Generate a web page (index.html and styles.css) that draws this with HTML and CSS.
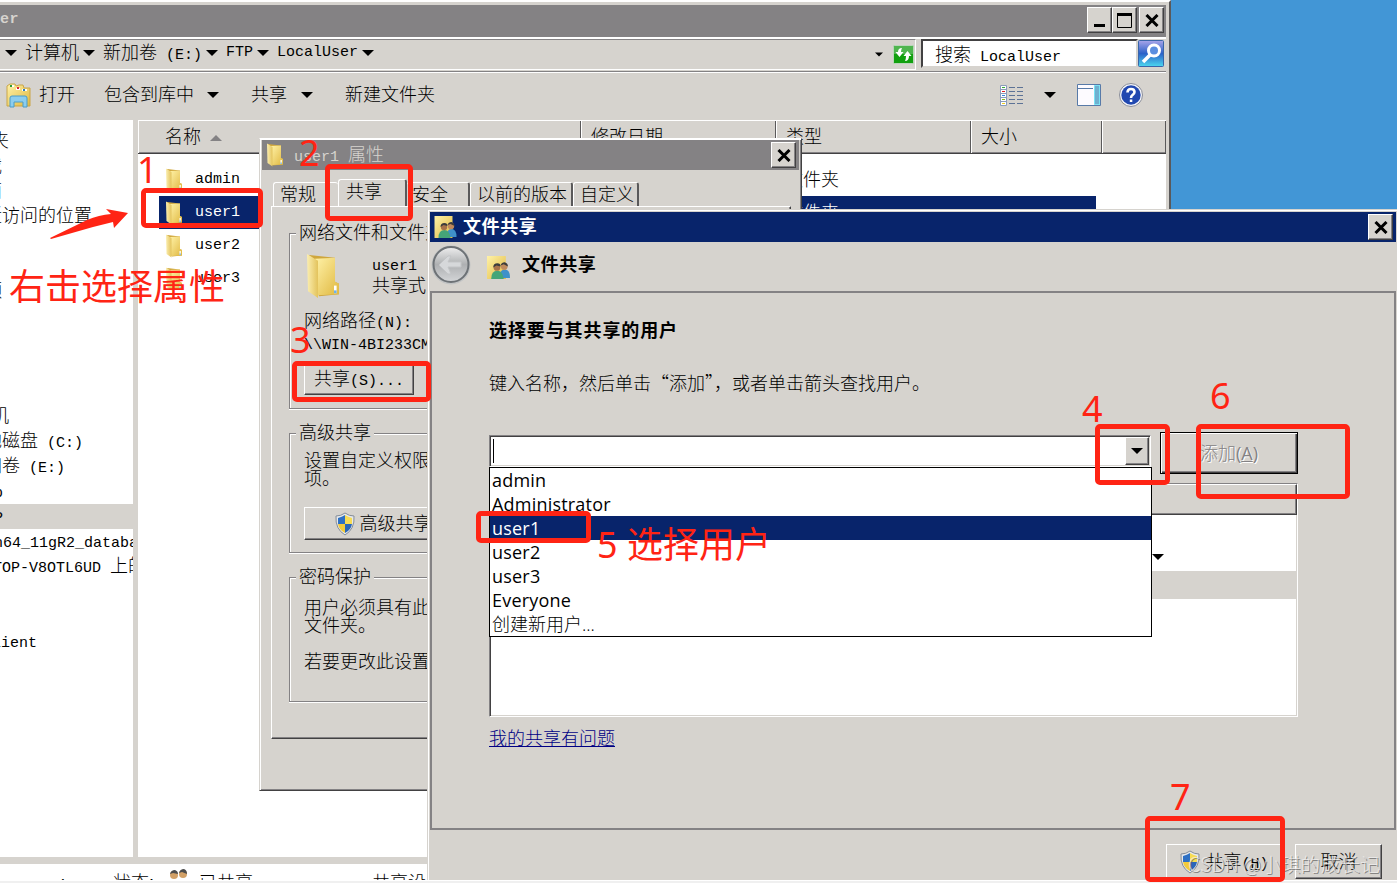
FILE: index.html
```html
<!DOCTYPE html>
<html lang="zh-CN">

<head>
  <meta charset="UTF-8" />
  <title>LocalUser</title>
  <link rel="stylesheet" href="styles.css">
</head>

<body>
  <!-- shared icons -->
  <svg class="defs" width="0" height="0">
    <defs>
      <linearGradient id="gold" x1="0" x2="1" y1="0" y2="1">
        <stop offset="0" stop-color="#fff2a8" />
        <stop offset="1" stop-color="#e0b840" />
      </linearGradient>
      <linearGradient id="lens" x1="0" x2="0" y1="0" y2="1">
        <stop offset="0" stop-color="#a9a5ea" />
        <stop offset="0.5" stop-color="#2c62c8" />
        <stop offset="1" stop-color="#4cd8f0" />
      </linearGradient>
      <linearGradient id="silver" x1="0" x2="0" y1="0" y2="1">
        <stop offset="0" stop-color="#eeeeee" />
        <stop offset="0.5" stop-color="#aeb0b2" />
        <stop offset="1" stop-color="#d4d6d8" />
      </linearGradient>
      <linearGradient id="flap" x1="0" x2="1" y1="0" y2="0">
        <stop offset="0" stop-color="#fbeeb0" />
        <stop offset="1" stop-color="#e3c35c" />
      </linearGradient>
      <symbol id="folder" viewBox="0 0 18 24" preserveAspectRatio="none">
        <path d="M2 1L15 2.500V15L17 16V21.500L7 22.500Z" fill="#cfa63c" />
        <path d="M5 3L15 2.500V15L17 16V21.500L6 22Z" fill="url(#gold)" />
        <path d="M1 .5L6.500 4V23.500L1.500 20Z" fill="url(#flap)" />
        <path d="M14.500 17h1.300v4h-1.300z" fill="#fff" />
        <path d="M14.500 19.500h1.300v1.500h-1.300z" fill="#6fb0e8" />
      </symbol>
      <symbol id="people" viewBox="0 0 22 22">
        <path d="M0 0H18V22H0Z" fill="url(#gold)" />
        <path d="M12 21q0-8 5-8q5 0 5 8z" fill="#3f91c9" />
        <path d="M4 22q0-8 6-8q5 0 6 8z" fill="#45a578" />
        <circle cx="9.500" cy="11" r="3.200" fill="#a8734a" />
        <circle cx="16.500" cy="10" r="3.200" fill="#c08a5c" />
        <path d="M6 11Q6 7 10 7Q13 7 13 10L9 9ZM13 9Q14 6 17 6Q20 7 20 10L16 8Z" fill="#3c3c3c" />
      </symbol>
      <symbol id="shield" viewBox="0 0 20 24">
        <path d="M10 1Q14 4 19 4Q20 17 10 23Q0 17 1 4Q6 4 10 1Z" fill="#e5e8ec" stroke="#858d98" />
        <path d="M10 3Q7 5 3 6V12H10Z" fill="#2d70c4" />
        <path d="M10 3Q13 5 17 6V12H10Z" fill="#f7dc55" />
        <path d="M3 12H10V21Q4 18 3 12Z" fill="#f2cb3b" />
        <path d="M17 12H10V21Q16 18 17 12Z" fill="#2a66b8" />
      </symbol>
      <symbol id="down" viewBox="0 0 12 6">
        <path d="M0 0H12L6 6Z" fill="#000" />
      </symbol>
      <symbol id="cross" viewBox="0 0 14 13">
        <path d="M1.500 1L12.500 12M12.500 1L1.500 12" stroke="#000" stroke-width="3" />
      </symbol>
    </defs>
  </svg>

  <div class="desktop">

    <div class="window explorer">
      <div class="title-bar inactive">
        <span class="en bold">er</span>
        <div class="controls">
          <button class="ctl"><svg width="14" height="14"><path d="M1 11H12V14H1Z" /></svg></button>
          <button class="ctl"><svg width="16" height="15"><path d="M.5 1H14.500V14.500H.5Z" fill="none" stroke="#000" /><path d="M0 0H15V3H0Z" /></svg></button>
          <button class="ctl last"><svg width="14" height="13"><use href="#cross" /></svg></button>
        </div>
      </div>

      <div class="address-row">
        <div class="address">
          <svg class="arrow"><use href="#down" /></svg>
          <span>计算机</span>
          <svg class="arrow"><use href="#down" /></svg>
          <span>新加卷<span class="en"> (E:)</span></span>
          <svg class="arrow"><use href="#down" /></svg>
          <span class="en">FTP</span>
          <svg class="arrow"><use href="#down" /></svg>
          <span class="en">LocalUser</span>
          <svg class="arrow"><use href="#down" /></svg>
          <svg class="arrow small"><use href="#down" /></svg>
          <svg class="refresh" width="21" height="19" viewBox="0 0 21 19">
            <rect x=".5" y=".5" width="20" height="18" rx="1" fill="#4fb54f" stroke="#b9d6b9" />
            <path d="M1 9H20V18H1Z" fill="#12a00f" />
            <path d="M9 3Q5 3 5 7H2.500L6.500 12L10.500 7H8Q8 5 9 3ZM12 16Q16 16 16 11H18.500L14.500 6L10.500 11H13Q13 14 12 16Z" fill="#fff" />
          </svg>
        </div>
        <div class="search">搜索<span class="en"> LocalUser</span></div>
        <svg class="search-btn" width="26" height="27" viewBox="0 0 26 27">
          <rect x=".5" y=".5" width="25" height="26" rx="1" fill="url(#lens)" stroke="#3a66a8" />
          <circle cx="16" cy="10.500" r="5.500" fill="#5b8ee0" stroke="#fff" stroke-width="3" />
          <path d="M12 15L5 22" stroke="#fff" stroke-width="3.500" />
        </svg>
      </div>

      <div class="toolbar">
        <svg width="25" height="25" viewBox="0 0 25 25">
          <path d="M1 3L4 1H9L10 3L13 2H17L18 5H24V23H1Z" fill="url(#gold)" stroke="#c9a548" />
          <path d="M4 2H8V4H4ZM10 5H14V7H10ZM16 6H21V8H16Z" fill="#fff" />
          <path d="M4 2h2v2H4z" fill="#2a9a3a" /><path d="M11 4h2v2h-2z" fill="#d23" /><path d="M17 6h2v2h-2z" fill="#2a7ac0" />
          <path d="M4 24V15Q4 13 6 13H19Q21 13 21 15V24H17V19H8V24Z" fill="#8ccdee" stroke="#4b9cc8" />
        </svg>
        <span class="t-open">打开</span>
        <span class="t-lib">包含到库中</span>
        <svg class="arrow"><use href="#down" /></svg>
        <span class="t-share">共享</span>
        <svg class="arrow"><use href="#down" /></svg>
        <span class="t-new">新建文件夹</span>
        <svg class="t-view" width="24" height="21" viewBox="0 0 24 21">
          <path d="M.5 .5H6.500V20.500H.5ZM0 4.500H7M0 8.500H7M0 12.500H7M0 16.500H7" fill="#fff" stroke="#8a9cba" />
          <path d="M9 2.500H15M17 2.500H23M9 6.500H15M17 6.500H23M9 10.500H15M17 10.500H23M9 14.500H15M17 14.500H23M9 18.500H15M17 18.500H23" stroke="#5c7296" />
          <path d="M2 2h3v1H2z" fill="#3a3" /><path d="M2 6h3v1H2z" fill="#d22" /><path d="M2 10h3v1H2z" fill="#38d" /><path d="M2 14h3v1H2z" fill="#8b2" /><path d="M2 18h3v1H2z" fill="#ec2" />
        </svg>
        <svg class="arrow"><use href="#down" /></svg>
        <svg class="t-pane" width="24" height="22" viewBox="0 0 24 22">
          <path d="M.5 .5H23.500V21.500H.5Z" fill="#fdfbff" stroke="#587aa8" />
          <path d="M1 4.500H16" stroke="#587aa8" />
          <path d="M17.500 1.500H22.500V20.500H17.500Z" fill="#6fb0d0" stroke="#79e3f5" />
        </svg>
        <svg class="t-help" width="24" height="24" viewBox="0 0 24 24">
          <circle cx="12" cy="12" r="11.500" fill="#f2f3f8" stroke="#8a8d98" />
          <circle cx="12" cy="12" r="9.700" fill="#2148b0" />
          <path d="M8.500 9.500Q8.500 6 12 6Q15.500 6 15.500 9Q15.500 11 13.500 12Q12 13 12 15" fill="none" stroke="#fff" stroke-width="2.600" />
          <path d="M10.800 16.500h2.500V19h-2.500z" fill="#fff" />
        </svg>
      </div>

      <div class="content">
        <ul class="nav">
          <li class="root">收藏夹</li>
          <li>下载</li>
          <li>桌面</li>
          <li>最近访问的位置</li>
          <li></li>
          <li></li>
          <li>视频</li>
          <li></li>
          <li></li>
          <li></li>
          <li></li>
          <li class="root">计算机</li>
          <li>本地磁盘<span class="en"> (C:)</span></li>
          <li>新加卷<span class="en"> (E:)</span></li>
          <li class="deep"><span class="en">ftp</span></li>
          <li class="deep selected"><span class="en">FTP</span></li>
          <li class="deep"><span class="en">win64_11gR2_database</span></li>
          <li class="root host"><span class="en">DESKTOP-V8OTL6UD </span>上的</li>
          <li></li>
          <li></li>
          <li class="client"><span class="en">Client</span></li>
        </ul>
        <div class="files">
          <div class="columns">
            <div class="col-name">名称 <i class="sort"></i></div>
            <div class="col-date">修改日期</div>
            <div class="col-type">类型</div>
            <div class="col-size">大小</div>
            <div class="col-rest"></div>
          </div>
          <div class="file">
            <svg width="18" height="24"><use href="#folder" /></svg>
            <span class="en fname">admin</span><span>文件夹</span>
          </div>
          <div class="file selected">
            <svg width="18" height="24"><use href="#folder" /></svg>
            <span class="en fname">user1</span><span>文件夹</span>
          </div>
          <div class="file">
            <svg width="18" height="24"><use href="#folder" /></svg>
            <span class="en fname">user2</span><span>文件夹</span>
          </div>
          <div class="file">
            <svg width="18" height="24"><use href="#folder" /></svg>
            <span class="en fname">user3</span><span>文件夹</span>
          </div>
        </div>
      </div>

      <div class="status">
        <span class="s-name"><span class="en">user1</span></span>
        <span class="s-state">状态:</span>
        <svg width="20" height="20" viewBox="0 0 20 20">
          <circle cx="5" cy="6" r="4" fill="#d2a066" /><circle cx="14" cy="5" r="4" fill="#d2a066" />
          <path d="M1 5Q2 1 6 1Q9 2 9 5L4 4ZM10 4Q11 0 15 0Q18 1 18 5L13 3Z" fill="#4c4c4c" />
        </svg>
        <span class="s-shared">已共享</span>
        <span>共享设备</span>
      </div>
    </div>

    <div class="window props">
      <div class="title-bar inactive">
        <svg width="18" height="24"><use href="#folder" /></svg>
        <span class="props-title"><span class="en">user1 </span>属性</span>
        <div class="controls">
          <button class="ctl"><svg width="14" height="13"><use href="#cross" /></svg></button>
        </div>
      </div>
      <div class="tabs">
        <div class="tab">常规</div>
        <div class="tab active">共享</div>
        <div class="tab safe">安全</div>
        <div class="tab prev">以前的版本</div>
        <div class="tab">自定义</div>
      </div>
      <div class="tab-panel">
        <div class="group network">
          <div class="legend">网络文件和文件夹共享</div>
          <div class="share-info">
            <svg width="36" height="46"><use href="#folder" /></svg>
            <div><span class="en">user1</span><br>共享式</div>
          </div>
          <p class="path">网络路径<span class="en">(N):</span><br><span class="en">\\WIN-4BI233CMEF\user1</span></p>
          <button class="btn share-btn"><span>共享<span class="en">(S)...</span></span></button>
        </div>
        <div class="group advanced">
          <div class="legend">高级共享</div>
          <p>设置自定义权限，创建多个共享<br>项。</p>
          <button class="btn adv-btn"><svg width="20" height="24"><use href="#shield" /></svg>高级共享</button>
        </div>
        <div class="group password">
          <div class="legend">密码保护</div>
          <p>用户必须具有此计算机的帐户<br>文件夹。</p>
          <p class="more">若要更改此设置，请使用</p>
        </div>
      </div>
    </div>

    <div class="window sharing">
      <div class="title-bar">
        <svg width="23" height="22"><use href="#people" /></svg>
        <span class="bold">文件共享</span>
        <div class="controls">
          <button class="ctl"><svg width="14" height="13"><use href="#cross" /></svg></button>
        </div>
      </div>
      <div class="wizard-head">
        <svg width="42" height="42" viewBox="0 0 42 42">
          <circle cx="21" cy="21" r="19.500" fill="#c2c4c5" />
          <circle cx="21" cy="20.500" r="17.500" fill="url(#silver)" stroke="#6d7276" stroke-width="2" />
          <path d="M9 21L18 12H21L18 18H31V23H18L21 30H18Z" fill="#d6d8da" stroke="#c3c5c7" />
        </svg>
        <svg class="people" width="23" height="23"><use href="#people" /></svg>
        <span class="bold">文件共享</span>
      </div>
      <div class="wizard-body">
        <h1 class="bold">选择要与其共享的用户</h1>
        <p class="hint">键入名称，然后单击“添加”，或者单击箭头查找用户。</p>
        <div class="add-row">
          <div class="combo">
            <span class="caret"></span>
            <button class="ctl"><svg width="12" height="6"><use href="#down" /></svg></button>
            <ul class="options">
              <li>admin</li>
              <li>Administrator</li>
              <li class="selected">user1</li>
              <li>user2</li>
              <li>user3</li>
              <li>Everyone</li>
              <li>创建新用户...</li>
            </ul>
          </div>
          <button class="add">添加<b>(<u>A</u>)</b></button>
        </div>
        <div class="people-list">
          <div class="list-head"></div>
          <div class="list-row"><svg width="12" height="6"><use href="#down" /></svg></div>
          <div class="list-row gray"></div>
        </div>
        <a class="link">我的共享有问题</a>
      </div>
      <div class="wizard-foot">
        <button class="btn ok"><svg width="20" height="24"><use href="#shield" /></svg><span>共享<span class="en">(<u>H</u>)</span></span></button>
        <button class="btn cancel">取消</button>
      </div>
    </div>

    <div class="bottom-edge"></div>

    <!-- step marks -->
    <div class="mark box1"></div>
    <div class="mark box2"></div>
    <div class="mark box3"></div>
    <div class="mark box4"></div>
    <div class="mark box5"></div>
    <div class="mark box6"></div>
    <div class="mark box7"></div>
    <div class="note n1">1</div>
    <div class="note n2">2</div>
    <div class="note n3">3</div>
    <div class="note n4">4</div>
    <div class="note n5">5 选择用户</div>
    <div class="note n6">6</div>
    <div class="note n7">7</div>
    <div class="note right-click">右击选择属性</div>
    <svg class="pointer" width="80" height="32" viewBox="0 0 80 32">
      <path d="M1 30L38 12Q50 7 62 6L57 1L79 5L65 20L64 14L44 19L2 31Z" fill="#ff2414" />
    </svg>
    <div class="watermark">CSDN @小琪的成长记</div>
  </div>
</body>

</html>
```
FILE: styles.css
```css
* {
  box-sizing: border-box;
}

body {
  margin: 0;
  font-family: "Liberation Sans", "Noto Sans CJK SC", sans-serif;
  font-size: 18px;
  font-weight: 300;
  line-height: 18px;
  color: #000;
}

ul,
p,
h1 {
  margin: 0;
  padding: 0;
  list-style: none;
}

button {
  font: inherit;
  padding: 0;
  border: 0;
  color: #000;
}

svg {
  display: block;
  flex: none;
}

.defs {
  position: absolute;
}

.desktop {
  position: relative;
  width: 1397px;
  height: 883px;
  overflow: hidden;
  background: #4296d6;
  white-space: nowrap;
}

.en {
  font-family: "Liberation Mono", monospace;
  font-size: 15px;
  line-height: 0;
  white-space: pre;
}

.bold {
  font-size: 18px;
  font-weight: 700;
  letter-spacing: 0.6px;
}

h1.bold {
  letter-spacing: 0.9px;
}

.en.bold {
  font-size: 15px;
}

.arrow {
  width: 12px;
  height: 6px;
}

/* windows */
.window {
  position: absolute;
  background: #d6d3ce;
}

.title-bar {
  height: 30px;
  display: flex;
  align-items: center;
  background: #08246b;
  color: #fff;
}

.title-bar.inactive {
  background: #848284;
  color: #d6d3ce;
}

.controls {
  display: flex;
  margin-left: auto;
}

.ctl {
  width: 25px;
  height: 26px;
  display: flex;
  align-items: center;
  justify-content: center;
  background: #d6d3ce;
  border: 1px solid;
  border-color: #fff #424142 #424142 #fff;
  box-shadow: inset -1px -1px #848284;
}

.explorer {
  left: 0;
  top: 0;
  width: 1171px;
  height: 881px;
  padding: 3px 3px 0 0;
  border-top: 2px solid #fff;
  border-right: 2px solid #5a595a;
}

.explorer > .title-bar {
  padding-right: 2px;
}

.ctl.last {
  margin-left: 2px;
}

.address-row {
  height: 37px;
  display: flex;
  border-top: 2px solid #848284;
  border-bottom: 1px solid #848284;
  box-shadow: inset 0 2px #fff, 0 1px #fff;
  padding-top: 2px;
}

.address {
  width: 916px;
  height: 31px;
  display: flex;
  align-items: center;
  padding: 0 1px 4px 5px;
  border-top: 1px solid #848284;
  border-bottom: 1px solid #fff;
  border-right: 1px solid #fff;
}

.address span {
  margin: 0 4px 0 8px;
}

.address span span {
  margin: 0;
}

.arrow.small {
  width: 8px;
  height: 5px;
  margin-left: auto;
  margin-top: 4px;
}

.refresh {
  margin: 4px 0 0 10px;
}

.search {
  width: 217px;
  height: 29px;
  margin-left: 5px;
  padding: 5px 0 0 12px;
  background: #fff;
  border: 2px solid;
  border-color: #424142 #d6d3ce #d6d3ce #424142;
}

.search-btn {
  margin-top: 1px;
}

.toolbar {
  height: 48px;
  display: flex;
  align-items: center;
  padding: 0 23px 2px 6px;
}

.t-open {
  width: 65px;
  margin-left: 8px;
}

.t-lib {
  width: 103px;
}

.t-share {
  width: 50px;
  margin-left: 32px;
}

.t-new {
  margin-left: 32px;
}

.t-view {
  margin: 0 20px 0 auto;
}

.t-pane {
  margin: 0 18px 0 21px;
}

.content {
  height: 737px;
  display: flex;
}

.nav {
  width: 133px;
  padding-top: 9px;
  overflow: hidden;
  background: #fff;
}

.nav li {
  height: 25px;
  line-height: 25px;
  text-indent: -34px;
}

.nav .en {
  line-height: 0;
}

.nav .root {
  text-indent: -45px;
}

.nav .host {
  text-indent: -43px;
}

.nav .deep {
  text-indent: -24px;
}

.nav .client {
  text-indent: -17px;
}

.nav .selected {
  background: #d6d3ce;
}

.files {
  flex: 1;
  margin-left: 5px;
  background: #fff;
}

.columns {
  height: 34px;
  display: flex;
  margin-bottom: 9px;
  background: #d6d3ce;
  border-top: 1px solid #fff;
  border-bottom: 1px solid #424142;
  box-shadow: inset 0 -1px #848284;
}

.columns div {
  padding: 7px 0 0 9px;
  border-left: 1px solid #fff;
  border-right: 1px solid #5a595a;
}

.columns .col-name {
  width: 443px;
  padding-left: 26px;
}

.col-date {
  width: 195px;
}

.col-type {
  width: 195px;
}

.col-size {
  width: 131px;
}

.col-rest {
  flex: 1;
}

.sort {
  display: inline-block;
  margin: 0 0 2px 4px;
  border: 6px solid transparent;
  border-top: 0;
  border-bottom-color: #848284;
}

.file {
  width: 937px;
  height: 33px;
  display: flex;
  align-items: center;
  margin-left: 21px;
  padding-left: 6px;
}

.file.selected {
  background: #08246b;
  color: #fff;
}

.fname {
  width: 590px;
  margin-left: 12px;
}

.status {
  height: 17px;
  display: flex;
  overflow: hidden;
  margin-top: 7px;
  padding: 10px 0 0 22px;
  background: #fff;
}

.status svg {
  margin: -5px 0 0 9px;
}

.s-name {
  width: 91px;
}

.s-state {
  width: 47px;
}

.s-shared {
  width: 173px;
  margin-left: 10px;
}

/* properties dialog */
.props {
  left: 259px;
  top: 138px;
  width: 543px;
  height: 653px;
  padding: 1px 2px 0;
  border: 1px solid;
  border-color: #fff #424142 #424142 #d6d3ce;
  box-shadow: inset 1px 1px #fff, inset -1px -1px #848284;
}

.props > .title-bar {
  padding: 0 3px 0 4px;
}

.props-title {
  margin-left: 10px;
}

.tabs {
  height: 36px;
  display: flex;
  align-items: flex-end;
  padding-left: 11px;
}

.tab {
  height: 24px;
  padding: 3px 3px 0 6px;
  border: 1px solid #fff;
  border-bottom: 0;
  border-right: 2px solid #5a595a;
  border-radius: 3px 3px 0 0;
}

.tab:first-child {
  width: 65px;
  border-right: 0;
}

.tab.active {
  width: 69px;
  height: 27px;
  padding-left: 7px;
  background: #d6d3ce;
}

.tab.safe {
  width: 63px;
  padding-left: 5px;
  border-left: 0;
}

.tab.prev {
  width: 103px;
}

.tab-panel {
  width: 520px;
  height: 533px;
  margin-left: 9px;
  padding: 26px 14px 0 17px;
  border: 1px solid;
  border-color: #fff #424142 #424142 #fff;
  box-shadow: inset -1px -1px #848284;
}

.group {
  border: 1px solid #848284;
  box-shadow: inset 1px 1px #fff, 0 1px #fff;
  padding-left: 14px;
  margin-bottom: 24px;
}

.legend {
  width: fit-content;
  height: 18px;
  margin: -10px 0 0 -8px;
  padding: 0 3px;
  background: #d6d3ce;
}

.network {
  height: 176px;
}

.advanced {
  height: 120px;
}

.password {
  height: 125px;
}

.share-info {
  display: flex;
  padding-top: 11px;
  line-height: 22px;
}

.share-info svg {
  margin-left: 1px;
}

.share-info div {
  margin-left: 31px;
}

.path {
  margin-top: 11px;
  line-height: 22px;
}

.btn {
  display: flex;
  align-items: center;
  justify-content: center;
  background: #d6d3ce;
  border: 1px solid;
  border-color: #fff #424142 #424142 #fff;
  box-shadow: inset -1px -1px #848284;
}

.share-btn {
  width: 110px;
  height: 30px;
  margin-top: 11px;
  padding-bottom: 2px;
}

.advanced p {
  margin-top: 10px;
}

.adv-btn {
  width: 158px;
  height: 33px;
  margin-top: 19px;
  gap: 5px;
}

.password p {
  margin-top: 13px;
}

.password .more {
  margin-top: 18px;
}

/* file sharing wizard */
.sharing {
  left: 427px;
  top: 209px;
  width: 970px;
  height: 672px;
  padding: 1px 1px 0 1px;
  border: 1px solid #d6d3ce;
  border-right: 0;
  box-shadow: inset 1px 1px #fff;
}

.sharing > .title-bar {
  margin: 1px 0 0 1px;
  padding: 0 3px 0 4px;
}

.sharing > .title-bar .bold {
  margin-left: 6px;
}

.wizard-head {
  height: 49px;
  display: flex;
  align-items: center;
  padding: 0 0 3px 1px;
}

.people {
  margin: 4px 12px 0 15px;
}

.wizard-body {
  height: 539px;
  margin-left: 1px;
  border: 2px solid #848284;
  padding: 29px 0 0 57px;
}

.hint {
  margin-top: 33px;
  font-family: "Noto Sans CJK SC", sans-serif;
}

.add-row {
  display: flex;
  margin-top: 41px;
}

.combo {
  position: relative;
  width: 662px;
  height: 32px;
  display: flex;
  justify-content: space-between;
  margin-top: 3px;
  background: #fff;
  border: 1px solid;
  border-color: #848284 #fff #fff #848284;
  box-shadow: inset 1px 1px #424142, inset -1px -1px #d6d3ce;
}

.caret {
  width: 1px;
  height: 24px;
  margin: 3px;
  background: #000;
}

.combo .ctl {
  width: 24px;
  height: 28px;
  margin: 1px;
}

.options {
  position: absolute;
  left: -1px;
  top: 31px;
  width: 663px;
  z-index: 2;
  background: #fff;
  border: 1px solid #000;
  font-family: "Open Sans", "Noto Sans CJK SC", sans-serif;
  font-weight: 400;
  letter-spacing: 0.2px;
}

.options li {
  height: 24px;
  line-height: 24px;
  padding-left: 2px;
}

.options li:last-child {
  font-weight: 300;
  letter-spacing: 0;
}

.options .selected {
  background: #08246b;
  color: #fff;
}

.add {
  width: 138px;
  height: 42px;
  margin-left: 9px;
  background: #d6d3ce;
  border: 1px solid #000;
  box-shadow: inset 1px 1px #fff, inset -1px -1px #424142, inset -2px -2px #848284;
  color: #848284;
  text-shadow: 1px 1px #fff;
  font-family: "Open Sans", "Noto Sans CJK SC", sans-serif;
}

.add b {
  font-weight: 400;
}

.people-list {
  width: 809px;
  height: 234px;
  margin-top: 9px;
  background: #fff;
  border: 1px solid;
  border-color: #848284 #fff #fff #848284;
  box-shadow: inset 1px 1px #424142, inset -1px -1px #d6d3ce;
}

.list-head {
  width: 806px;
  height: 31px;
  margin-left: 1px;
  background: #d6d3ce;
  border: 1px solid;
  border-color: #fff #424142 #424142 #fff;
  box-shadow: inset -1px -1px #848284;
}

.list-row {
  height: 56px;
  width: 806px;
  padding: 39px 0 0 662px;
}

.list-row.gray {
  height: 28px;
  padding: 0;
  background: #d6d3ce;
}

.link {
  display: block;
  margin-top: 13px;
  color: #000084;
  text-decoration: underline;
}

.wizard-foot {
  display: flex;
  justify-content: flex-end;
  gap: 12px;
  padding: 14px 14px 0 0;
}

.wizard-foot .btn {
  height: 35px;
}

.ok {
  width: 117px;
  gap: 5px;
}

.cancel {
  width: 87px;
}

.bottom-edge {
  position: absolute;
  left: 0;
  top: 880px;
  width: 1397px;
  height: 3px;
  background: #f0f0f0;
  border-top: 1px solid #fff;
}

/* red marks over the windows */
.mark {
  position: absolute;
  z-index: 3;
  border: 5px solid #ff2414;
  border-radius: 5px;
}

.box1 { left: 141px; top: 188px; width: 122px; height: 40px; }
.box2 { left: 325px; top: 164px; width: 88px; height: 57px; }
.box3 { left: 292px; top: 361px; width: 139px; height: 41px; }
.box4 { left: 1095px; top: 424px; width: 75px; height: 61px; }
.box5 { left: 476px; top: 511px; width: 115px; height: 32px; }
.box6 { left: 1196px; top: 424px; width: 154px; height: 75px; }
.box7 { left: 1145px; top: 816px; width: 140px; height: 66px; }

.note {
  position: absolute;
  z-index: 3;
  font-family: "Noto Sans", "Noto Sans CJK SC", sans-serif;
  font-size: 36px;
  font-weight: 400;
  line-height: 40px;
  color: #ff2414;
}

.n1 { left: 137px; top: 150px; }
.n2 { left: 299px; top: 133px; }
.n3 { left: 290px; top: 320px; }
.n4 { left: 1082px; top: 389px; }
.n5 { left: 597px; top: 525px; }
.n6 { left: 1210px; top: 376px; }
.n7 { left: 1170px; top: 777px; }
.right-click { left: 9px; top: 267px; }

.pointer {
  position: absolute;
  left: 49px;
  top: 208px;
}

.watermark {
  position: absolute;
  left: 1188px;
  top: 853px;
  font-family: "Noto Sans CJK SC", sans-serif;
  font-size: 19.800px;
  line-height: 22px;
  color: rgba(240, 240, 240, 0.75);
  text-shadow: 1px 1px rgba(80, 80, 80, 0.6);
}
```
